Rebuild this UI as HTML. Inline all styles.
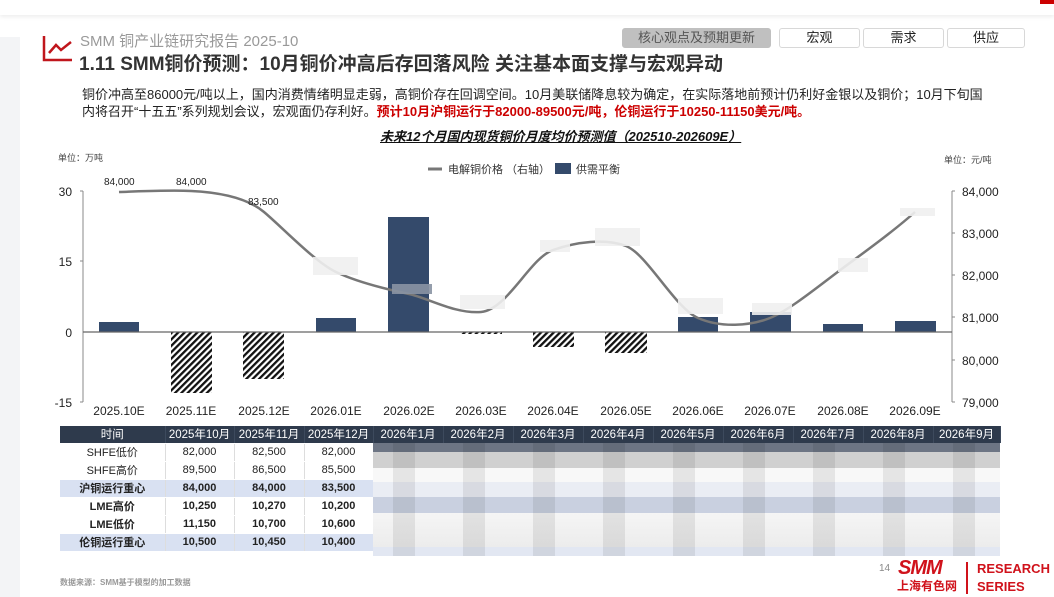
<!DOCTYPE html>
<html><head><meta charset="utf-8"><style>
*{margin:0;padding:0;box-sizing:border-box}
body{width:1054px;height:597px;overflow:hidden;background:#fff;font-family:"Liberation Sans","Noto Sans CJK SC",sans-serif;position:relative;color:#222}
.abs{position:absolute}
.tab{position:absolute;top:28px;height:20px;border:1px solid #d8d8d8;border-radius:3px;font-size:13px;text-align:center;line-height:18px;background:#fff;color:#222}
table{border-collapse:collapse;position:absolute;left:60px;top:426px;font-size:11px}
td,th{height:18px;text-align:center;border-right:1px solid #ddd;border-bottom:1px solid #fff}
th{background:#2e3a4c;color:#fff;font-weight:normal;font-size:11.5px;height:17px;border-right:1px solid #3d4a5d}
tr.b td{background:#d9e1f2;font-weight:bold}
tr.w td{background:#fff}
tr.k td{font-weight:bold}
</style></head><body>
<div class="abs" style="left:0;top:0;width:1054px;height:15px;background:#fff;box-shadow:0 2px 4px #eee"></div>
<div class="abs" style="left:0;top:37px;width:20px;height:560px;background:#f3f4f6"></div>
<div class="abs" style="left:1040px;top:0;width:14px;height:4px;background:#c00"></div>
<svg class="abs" style="left:42px;top:34px" width="32" height="30"><path d="M2 2V26H30" fill="none" stroke="#c0161c" stroke-width="2.5"/><path d="M7 19L14 11L19 16L29 8" fill="none" stroke="#c0161c" stroke-width="2.5"/></svg>
<div class="abs" style="left:80px;top:30px;font-size:15px;color:#999">SMM 铜产业链研究报告 2025-10</div>
<div class="abs" style="left:79px;top:49px;font-size:19px;font-weight:bold;color:#333">1.11 SMM铜价预测：10月铜价冲高后存回落风险 关注基本面支撑与宏观异动</div>
<div class="tab" style="left:622px;width:149px;background:#c0c0c0;border-color:#c0c0c0;color:#555">核心观点及预期更新</div>
<div class="tab" style="left:779px;width:81px">宏观</div>
<div class="tab" style="left:863px;width:81px">需求</div>
<div class="tab" style="left:947px;width:78px">供应</div>
<div class="abs" style="left:82px;top:86px;font-size:13px;line-height:17px;width:910px">铜价冲高至86000元/吨以上，国内消费情绪明显走弱，高铜价存在回调空间。10月美联储降息较为确定，在实际落地前预计仍利好金银以及铜价；10月下旬国内将召开“十五五”系列规划会议，宏观面仍存利好。<b style="color:#c00">预计10月沪铜运行于82000-89500元/吨，伦铜运行于10250-11150美元/吨。</b></div>
<div class="abs" style="left:380px;top:126px;font-size:13px;font-weight:bold;font-style:italic;text-decoration:underline;color:#111">未来12个月国内现货铜价月度均价预测值（202510-202609E）</div>
<svg class="abs" style="left:0;top:0" width="1054" height="430" font-family="Liberation Sans,Noto Sans CJK SC,sans-serif">
<defs><pattern id="h" width="4.5" height="4.5" patternUnits="userSpaceOnUse" patternTransform="rotate(45)"><rect width="4.5" height="4.5" fill="#fff"/><rect width="2.3" height="4.5" fill="#111"/></pattern></defs>
<text x="58" y="161" font-size="9" fill="#444">单位：万吨</text>
<text x="944" y="163" font-size="9" fill="#444">单位：元/吨</text>
<line x1="428" y1="169" x2="442" y2="169" stroke="#777" stroke-width="3"/>
<text x="448" y="173" font-size="11" fill="#333">电解铜价格 （右轴）</text>
<rect x="555" y="163" width="16" height="11" fill="#344a6b"/>
<text x="576" y="173" font-size="11" fill="#333">供需平衡</text>
<line x1="83" y1="191" x2="83" y2="402" stroke="#888"/>
<g stroke="#888"><line x1="80" y1="191" x2="83" y2="191"/><line x1="80" y1="261" x2="83" y2="261"/><line x1="80" y1="402" x2="83" y2="402"/></g>
<line x1="952" y1="191" x2="952" y2="402" stroke="#888"/>
<g stroke="#888"><line x1="952" y1="191" x2="955" y2="191"/><line x1="952" y1="233" x2="955" y2="233"/><line x1="952" y1="275" x2="955" y2="275"/><line x1="952" y1="317" x2="955" y2="317"/><line x1="952" y1="360" x2="955" y2="360"/><line x1="952" y1="402" x2="955" y2="402"/></g>
<g font-size="12" fill="#222" text-anchor="end"><text x="72" y="196">30</text><text x="72" y="266">15</text><text x="72" y="337">0</text><text x="72" y="407">-15</text></g>
<g font-size="12" fill="#222"><text x="962" y="196">84,000</text><text x="962" y="238">83,000</text><text x="962" y="280">82,000</text><text x="962" y="322">81,000</text><text x="962" y="365">80,000</text><text x="962" y="407">79,000</text></g>
<g fill="#344a6b"><rect x="99" y="322" width="40" height="10"/><rect x="316" y="318" width="40" height="14"/><rect x="388" y="217" width="41" height="115"/><rect x="678" y="317" width="40" height="15"/><rect x="750" y="312" width="41" height="20"/><rect x="823" y="324" width="40" height="8"/><rect x="895" y="321" width="41" height="11"/></g>
<g fill="url(#h)"><rect x="171" y="332" width="41" height="61"/><rect x="243" y="332" width="41" height="47"/><rect x="461" y="332" width="41" height="2"/><rect x="533" y="332" width="41" height="15"/><rect x="605" y="332" width="42" height="21"/></g>
<line x1="83" y1="332" x2="952" y2="332" stroke="#666" stroke-width="1.2"/>
<path d="M119,192 C150,191 170,190 191,191 S245,196 264,212 S315,262 336,272 S390,290 409,294 S455,314 481,312 S530,258 553,250 S605,238 626,246 S675,308 698,318 S750,326 770,318 S820,285 843,268 S895,230 915,212" fill="none" stroke="#777" stroke-width="2.5"/>
<g font-size="10" fill="#222"><text x="104" y="185">84,000</text><text x="176" y="185">84,000</text><text x="248" y="205">83,500</text></g>
<g fill="#f0f0f0" opacity="0.9"><rect x="313" y="257" width="45" height="18"/><rect x="392" y="284" width="40" height="10" fill="#8a94a4"/><rect x="460" y="295" width="45" height="14"/><rect x="540" y="240" width="30" height="12"/><rect x="595" y="228" width="45" height="18"/><rect x="678" y="298" width="45" height="16"/><rect x="752" y="303" width="40" height="12"/><rect x="838" y="258" width="30" height="14"/><rect x="900" y="208" width="35" height="8"/></g>
<g font-size="12" fill="#222" text-anchor="middle"><text x="119" y="415">2025.10E</text><text x="191" y="415">2025.11E</text><text x="264" y="415">2025.12E</text><text x="336" y="415">2026.01E</text><text x="409" y="415">2026.02E</text><text x="481" y="415">2026.03E</text><text x="553" y="415">2026.04E</text><text x="626" y="415">2026.05E</text><text x="698" y="415">2026.06E</text><text x="770" y="415">2026.07E</text><text x="843" y="415">2026.08E</text><text x="915" y="415">2026.09E</text></g>
</svg>
<table>
<tr><th style="width:105px">时间</th><th style="width:69px">2025年10月</th><th style="width:70px">2025年11月</th><th style="width:69px">2025年12月</th><th style="width:70px">2026年1月</th><th style="width:70px">2026年2月</th><th style="width:70px">2026年3月</th><th style="width:70px">2026年4月</th><th style="width:70px">2026年5月</th><th style="width:70px">2026年6月</th><th style="width:70px">2026年7月</th><th style="width:70px">2026年8月</th><th style="width:67px">2026年9月</th></tr>
<tr class="w"><td>SHFE低价</td><td>82,000</td><td>82,500</td><td>82,000</td></tr>
<tr class="w"><td>SHFE高价</td><td>89,500</td><td>86,500</td><td>85,500</td></tr>
<tr class="b"><td>沪铜运行重心</td><td>84,000</td><td>84,000</td><td>83,500</td></tr>
<tr class="w k"><td>LME高价</td><td>10,250</td><td>10,270</td><td>10,200</td></tr>
<tr class="w k"><td>LME低价</td><td>11,150</td><td>10,700</td><td>10,600</td></tr>
<tr class="b"><td>伦铜运行重心</td><td>10,500</td><td>10,450</td><td>10,400</td></tr>
</table>
<div class="abs" style="left:373px;top:443px;width:627px;height:113px;background:linear-gradient(#6d7584 0,#6d7584 9px,#d0d0d0 9px,#d0d0d0 25px,#f8f8f8 25px,#f8f8f8 39px,#eaedf4 39px,#eaedf4 54px,#c9d0e0 54px,#c9d0e0 70px,#f5f5f5 70px,#ececec 104px,#e2e7f2 104px)"></div>
<div class="abs" style="left:373px;top:443px;width:627px;height:113px;background:repeating-linear-gradient(90deg,rgba(0,0,0,0) 0,rgba(0,0,0,0) 20px,rgba(0,0,0,.08) 20px,rgba(0,0,0,.08) 42px,rgba(0,0,0,0) 42px,rgba(0,0,0,0) 70px)"></div>
<div class="abs" style="left:60px;top:577px;font-size:8px;color:#999;font-weight:bold">数据来源：SMM基于模型的加工数据</div>
<div class="abs" style="left:879px;top:563px;font-size:10px;color:#888">14</div>
<div class="abs" style="left:898px;top:558px;font-size:20px;font-weight:bold;font-style:italic;color:#d0121b;letter-spacing:-1px;line-height:20px">SMM</div>
<div class="abs" style="left:897px;top:579px;font-size:12px;font-weight:bold;color:#d0121b;line-height:14px">上海有色网</div>
<div class="abs" style="left:966px;top:562px;width:2px;height:32px;background:#d0121b"></div>
<div class="abs" style="left:977px;top:560px;font-size:13px;font-weight:bold;color:#d0121b;line-height:18px">RESEARCH<br>SERIES</div>
</body></html>
